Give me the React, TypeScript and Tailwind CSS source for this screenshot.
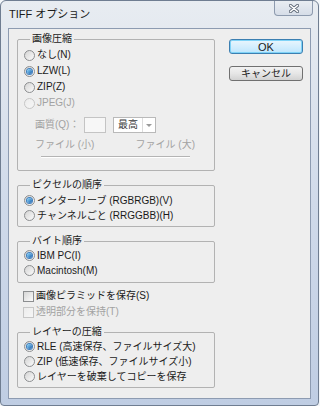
import type { ReactNode } from "react";

/* ── Small Win7-style controls ─────────────────────────────────────────── */

function Radio({ checked, disabled }: { checked?: boolean; disabled?: boolean }) {
  return (
    <span
      className={`flex h-[11px] w-[11px] shrink-0 items-center justify-center rounded-full border bg-gradient-to-br ${
        disabled
          ? "border-[#c6c6c6] from-[#ececec] to-[#f6f6f6]"
          : "border-[#8c8e90] from-[#d4d4d4] to-[#fbfbfb]"
      }`}
    >
      {checked && (
        <span className="h-[5px] w-[5px] rounded-full bg-gradient-to-br from-[#8fdcff] to-[#1b5ea8] ring-1 ring-[#3f7fbf]" />
      )}
    </span>
  );
}

function Check({ disabled }: { disabled?: boolean }) {
  return (
    <span
      className={`h-[11px] w-[11px] shrink-0 border bg-gradient-to-br ${
        disabled
          ? "border-[#c6c6c6] from-[#ececec] to-[#f6f6f6]"
          : "border-[#8c8e90] from-[#d6d6d6] to-[#fbfbfb]"
      }`}
    />
  );
}

function Option({
  label,
  checked,
  disabled,
  tall,
}: {
  label: string;
  checked?: boolean;
  disabled?: boolean;
  tall?: boolean;
}) {
  return (
    <div
      className={`flex items-center gap-[2px] ${tall ? "h-[16px]" : "h-[15px]"} ${
        disabled ? "text-[#a2a2a2]" : "text-[#1a1a1a]"
      }`}
    >
      <Radio checked={checked} disabled={disabled} />
      <span className="whitespace-nowrap">{label}</span>
    </div>
  );
}

function Group({
  title,
  children,
  className = "",
}: {
  title: string;
  children: ReactNode;
  className?: string;
}) {
  return (
    <fieldset className={`rounded-[2px] border border-[#b2b2b2] px-[6px] ${className}`}>
      <legend className="ml-[6px] px-[2px] leading-[12px] text-[#1a1a1a]">{title}</legend>
      {children}
    </fieldset>
  );
}

/* ── Dialog ────────────────────────────────────────────────────────────── */

export default function App() {
  return (
    <div
      className="h-[406px] w-[320px] bg-[#f4f7fa] text-[10px] leading-[12px]"
      style={{ fontFamily: '"Liberation Sans", "Noto Sans CJK JP", sans-serif' }}
    >
      <div className="flex h-[406px] w-[319px] flex-col rounded-t-[6px] rounded-b-[4px] border border-[#6f7d91] bg-gradient-to-b from-[#e8ecf1] via-[#d0daea] to-[#bfcde3]">
        {/* ── Title bar ───────────────────────────── */}
        <div className="flex h-[27px] shrink-0">
          <span className="mt-[7px] ml-[8px] text-[11px] leading-[12px] text-[#1a1a1a]">
            TIFF オプション
          </span>
          <div className="mr-[5px] ml-auto flex h-[15px] w-[39px] items-center justify-center rounded-b-[4px] border border-t-0 border-[#8d9aae] bg-gradient-to-b from-[#e9edf2] to-[#d6dde8]">
            <svg width="10" height="9" viewBox="0 0 10 9">
              <path d="M1.5 1.5l7 6M8.5 1.5l-7 6" stroke="#5d6776" strokeWidth="3.2" strokeLinecap="round" />
              <path d="M1.5 1.5l7 6M8.5 1.5l-7 6" stroke="#ffffff" strokeWidth="1.6" strokeLinecap="round" />
            </svg>
          </div>
        </div>

        {/* ── Client area ─────────────────────────── */}
        <div className="mx-[7px] flex h-[371px] border border-[#8d9bb1] bg-[#eeeeee] pl-[8px]">
          <div className="mt-[4px] flex w-[198px] flex-col">
            <Group title="画像圧縮" className="pb-[12px]">
              <div className="pt-[2px]">
                <Option tall label="なし(N)" />
                <Option tall label="LZW(L)" checked />
                <Option tall label="ZIP(Z)" />
                <Option tall label="JPEG(J)" disabled />
              </div>
              <div className="mt-[6px] flex h-[16px] items-center pl-[11px] text-[#a2a2a2]">
                <span className="w-[49px] whitespace-nowrap">画質(Q)：</span>
                <span className="h-[16px] w-[22px] border border-[#c4c4c4] bg-[#f7f7f7]" />
                <div className="ml-[7px] flex h-[16px] w-[43px] border border-[#b9b9b9] bg-white">
                  <span className="flex-1 pl-[4px] leading-[14px] text-[#3a3a3a]">最高</span>
                  <span className="flex w-[13px] items-center justify-center border-l border-[#dcdcdc]">
                    <span className="h-0 w-0 border-x-[3px] border-t-[3px] border-x-transparent border-t-[#9a9a9a]" />
                  </span>
                </div>
              </div>
              <div className="mt-[6px] flex h-[12px] justify-between pr-[13px] pl-[11px] text-[#a2a2a2]">
                <span>ファイル (小)</span>
                <span>ファイル (大)</span>
              </div>
              <div className="mt-[5px] mr-[18px] ml-[17px] h-[2px] border-t border-b border-t-[#b4b4b4] border-b-white" />
            </Group>

            <Group title="ピクセルの順序" className="mt-[8px] pt-[2px] pb-[3px]">
              <Option label="インターリーブ (RGBRGB)(V)" checked />
              <Option label="チャンネルごと (RRGGBB)(H)" />
            </Group>

            <Group title="バイト順序" className="mt-[8px] pt-[1px] pb-[4px]">
              <Option label="IBM PC(I)" checked />
              <Option label="Macintosh(M)" />
            </Group>

            <div className="mt-[5px] pl-[6px]">
              <div className="flex h-[16px] items-center gap-[2px] text-[#1a1a1a]">
                <Check />
                <span>画像ピラミッドを保存(S)</span>
              </div>
              <div className="flex h-[16px] items-center gap-[2px] text-[#a2a2a2]">
                <Check disabled />
                <span>透明部分を保持(T)</span>
              </div>
            </div>

            <Group title="レイヤーの圧縮" className="mt-[6px] pt-[1px] pb-[3px]">
              <Option label="RLE (高速保存、ファイルサイズ大)" checked />
              <Option label="ZIP (低速保存、ファイルサイズ小)" />
              <Option label="レイヤーを破棄してコピーを保存" />
            </Group>
          </div>

          {/* ── Buttons ─────────────────────────── */}
          <div className="mt-[10px] ml-[14px] flex w-[74px] flex-col gap-[12px]">
            <button className="h-[15px] rounded-[3px] border border-[#3c7fb1] bg-gradient-to-b from-[#eaf6fd] to-[#bee6fd] text-[11px] leading-[12px] text-[#1a1a1a] shadow-[inset_0_0_0_1px_#7fd3f7]">
              OK
            </button>
            <button className="h-[15px] rounded-[3px] border border-[#707070] bg-gradient-to-b from-[#f2f2f2] via-[#e6e6e6] to-[#d2d2d2] text-[10px] leading-[12px] text-[#1a1a1a]">
              キャンセル
            </button>
          </div>
        </div>
      </div>
    </div>
  );
}
